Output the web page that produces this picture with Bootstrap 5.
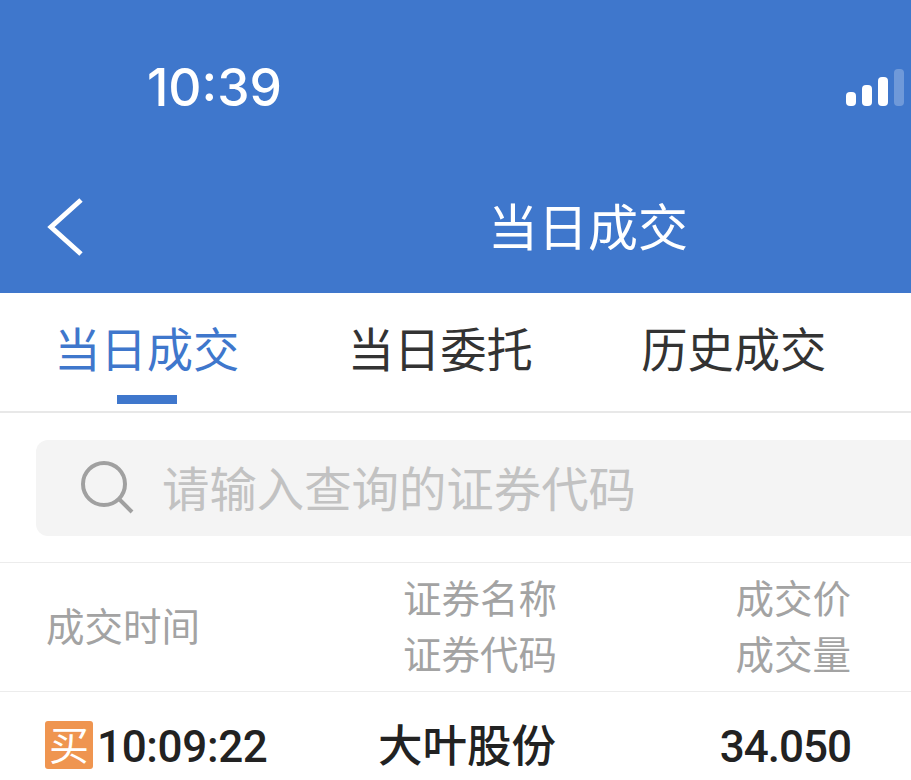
<!DOCTYPE html>
<html lang="zh-CN">
<head>
  <meta charset="UTF-8" />
  <meta name="viewport" content="width=device-width, initial-scale=1.0" />
  <title>当日成交</title>
  <link href="https://cdn.jsdelivr.net/npm/bootstrap@5.3.0/dist/css/bootstrap.min.css" rel="stylesheet" />
  <style>
    html, body { height: 780px; overflow: hidden; }
    body { font-family: "Noto Sans CJK SC", "Noto Sans", sans-serif; background: #fff; }
    .app-head { height: 293px; background: #3f77cc; color: #fff; }
    .status-row { height: 175px; padding: 62px 7px 0 147px; align-items: flex-start; }
    .clock { font-family: Inter, sans-serif; font-size: 51.5px; font-weight: 500; line-height: 50px; }
    .signal { gap: 6px; margin-top: 7px; align-items: flex-end; }
    .signal i { display: block; width: 10px; background: #fff; border-radius: 4px; }
    .signal i:nth-child(1) { height: 14px; }
    .signal i:nth-child(2) { height: 21px; }
    .signal i:nth-child(3) { height: 29px; }
    .signal i:nth-child(4) { height: 37px; opacity: .25; }
    .title-row { padding-left: 47px; align-items: center; height: 106px; }
    .back-icon { width: 38px; height: 60px; flex: none; margin-top: -3px; }
    .page-title { margin-left: 403px; font-size: 50px; line-height: 60px; margin-top: -8px; }
    .tab-bar { height: 120px; border-bottom: 2px solid #e8e8e8; }
    .tab-item { width: 293.5px; text-align: center; font-size: 46.3px; line-height: 108px; color: #333; position: relative; }
    .tab-item.on { color: #3f77cc; }
    .tab-item.on::after { content: ""; position: absolute; left: 117px; bottom: 7px; width: 60px; height: 9px; background: #3f77cc; }
    .search-wrap { padding: 27px 0 26px 36px; border-bottom: 1px solid #ececec; }
    .search-box { height: 96px; background: #f4f4f4; border-radius: 12px 0 0 12px; padding-left: 45px; gap: 28px; color: #c2c2c2; font-size: 47.4px; }
    .search-box span { margin-top: -3px; }
    .search-icon { width: 53px; height: 53px; flex: none; margin-top: -1px; }
    .col-time { width: 326px; flex: none; }
    .col-name { width: 216px; flex: none; text-align: center; }
    .head-row { height: 129px; padding: 0 60px 6px 46px; color: #a3a3a3; font-size: 38.5px; line-height: 56px; border-bottom: 1px solid #ececec; }
    .data-row { padding: 29px 60px 0 45px; color: #222; }
    .buy-tag { width: 48px; height: 48px; background: #ef9550; color: #fff; border-radius: 3px; font-size: 40px; line-height: 44px; text-align: center; flex: none; }
    .trade-time, .trade-price { font-family: Roboto, sans-serif; font-size: 44px; font-weight: 500; line-height: 50px; margin-top: 1px; }
    .trade-time { margin-left: 4px; letter-spacing: -.35px; }
    .trade-price { letter-spacing: -1px; }
    .trade-name { font-size: 44.5px; font-weight: 500; line-height: 48px; margin-left: -12px; margin-right: 12px; margin-top: -2px; }
  </style>
</head>
<body>
  <header class="app-head">
    <div class="status-row d-flex justify-content-between">
      <div class="clock">10:39</div>
      <div class="signal d-flex"><i></i><i></i><i></i><i></i></div>
    </div>
    <div class="title-row d-flex">
      <svg class="back-icon" viewBox="0 0 38 60"><path d="M34 3 L4 30 L34 57" fill="none" stroke="#fff" stroke-width="5"/></svg>
      <div class="page-title">当日成交</div>
    </div>
  </header>

  <nav class="tab-bar d-flex">
    <div class="tab-item on">当日成交</div>
    <div class="tab-item">当日委托</div>
    <div class="tab-item">历史成交</div>
  </nav>

  <div class="search-wrap">
    <div class="search-box d-flex align-items-center">
      <svg class="search-icon" viewBox="0 0 53 53"><circle cx="23" cy="23" r="21" fill="none" stroke="#a0a0a0" stroke-width="4"/><path d="M38 38 L51 51" stroke="#a0a0a0" stroke-width="4"/></svg>
      <span>请输入查询的证券代码</span>
    </div>
  </div>

  <div class="head-row d-flex align-items-center">
    <div class="col-time">成交时间</div>
    <div class="col-name">证券名称<br />证券代码</div>
    <div class="flex-grow-1 text-end">成交价<br />成交量</div>
  </div>

  <div class="data-row d-flex">
    <div class="col-time d-flex">
      <div class="buy-tag">买</div>
      <div class="trade-time">10:09:22</div>
    </div>
    <div class="col-name trade-name">大叶股份</div>
    <div class="flex-grow-1 text-end trade-price">34.050</div>
  </div>

  <script src="https://cdn.jsdelivr.net/npm/bootstrap@5.3.0/dist/js/bootstrap.bundle.min.js"></script>
</body>
</html>
